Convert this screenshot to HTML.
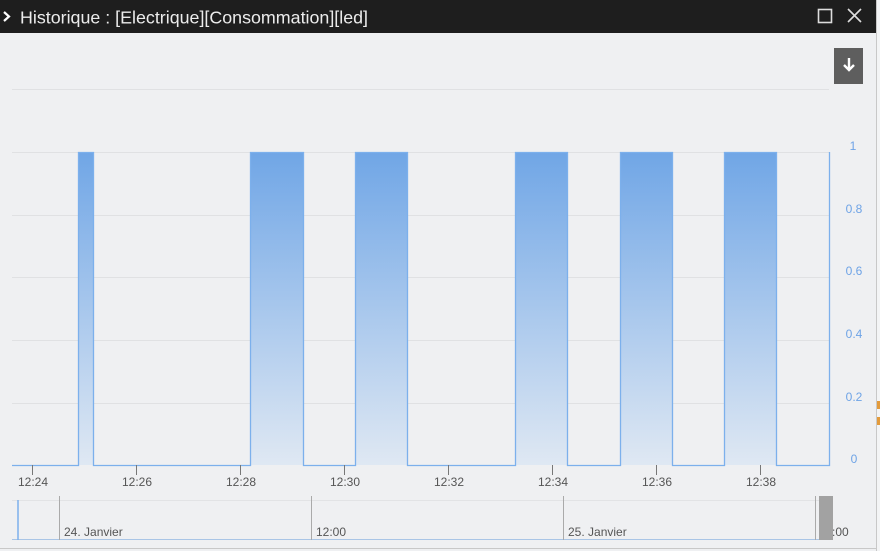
<!DOCTYPE html>
<html><head><meta charset="utf-8"><style>
html,body{margin:0;padding:0;background:#f3f4f5;width:880px;height:551px;overflow:hidden;font-family:"Liberation Sans",sans-serif}
</style></head><body>
<svg width="880" height="551" viewBox="0 0 880 551" xmlns="http://www.w3.org/2000/svg" style="display:block">
<defs><linearGradient id="g" x1="0" y1="0" x2="0" y2="1">
<stop offset="0" stop-color="#70a6e6"/><stop offset="1" stop-color="#dfe8f3"/></linearGradient></defs>
<rect x="0" y="0" width="876" height="551" fill="#eff0f2"/>
<line x1="876.5" y1="0" x2="876.5" y2="551" stroke="#c8c8c8"/>
<line x1="0" y1="548.5" x2="876" y2="548.5" stroke="#c8c8c8"/>
<rect x="0" y="0" width="876" height="33" fill="#1e1e1e"/>
<path d="M4 12 L9 16.5 L4 21" fill="none" stroke="#fff" stroke-width="2.2"/>
<text x="20" y="23.5" fill="#ececec" font-size="17.5" textLength="348" lengthAdjust="spacingAndGlyphs">Historique : [Electrique][Consommation][led]</text>
<rect x="818.5" y="9.5" width="13" height="13" fill="none" stroke="#ddd" stroke-width="1.6"/>
<path d="M848 9 L861 22 M861 9 L848 22" stroke="#ddd" stroke-width="1.6"/>
<rect x="834" y="48" width="29" height="36" fill="#5e5e5e"/>
<path d="M849 58 V70 M844 65 L849 70 L854 65" fill="none" stroke="#fff" stroke-width="2.4"/>
<g stroke="#e0e1e3" stroke-width="1">
<line x1="12" y1="89.5" x2="829" y2="89.5"/>
<line x1="12" y1="152.5" x2="829" y2="152.5"/>
<line x1="12" y1="215.5" x2="829" y2="215.5"/>
<line x1="12" y1="277.5" x2="829" y2="277.5"/>
<line x1="12" y1="340.5" x2="829" y2="340.5"/>
<line x1="12" y1="403.5" x2="829" y2="403.5"/>
</g>
<g fill="url(#g)">
<rect x="78" y="152" width="15" height="313"/>
<rect x="250" y="152" width="53" height="313"/>
<rect x="355" y="152" width="52" height="313"/>
<rect x="515" y="152" width="52" height="313"/>
<rect x="620" y="152" width="52" height="313"/>
<rect x="724" y="152" width="52" height="313"/>
</g>
<path d="M12 465.5 H78.5 V152.5 H93.5 V465.5 H250.5 V152.5 H303.5 V465.5 H355.5 V152.5 H407.5 V465.5 H515.5 V152.5 H567.5 V465.5 H620.5 V152.5 H672.5 V465.5 H724.5 V152.5 H776.5 V465.5 H829.5 V152" fill="none" stroke="#7cb0ec" stroke-width="1.3"/>
<g fill="#6ea3e6" font-size="12" text-anchor="middle">
<text x="853" y="150">1</text><text x="854" y="213">0.8</text><text x="854" y="275">0.6</text>
<text x="854" y="338">0.4</text><text x="854" y="401">0.2</text><text x="854" y="463">0</text>
</g>
<g stroke="#777" stroke-width="1">
<line x1="32.5" y1="465" x2="32.5" y2="475"/><line x1="136.5" y1="465" x2="136.5" y2="475"/>
<line x1="240.5" y1="465" x2="240.5" y2="475"/><line x1="344.5" y1="465" x2="344.5" y2="475"/>
<line x1="448.5" y1="465" x2="448.5" y2="475"/><line x1="552.5" y1="465" x2="552.5" y2="475"/>
<line x1="656.5" y1="465" x2="656.5" y2="475"/><line x1="760.5" y1="465" x2="760.5" y2="475"/>
</g>
<g fill="#555" font-size="12" text-anchor="middle">
<text x="33" y="486">12:24</text><text x="137" y="486">12:26</text><text x="241" y="486">12:28</text>
<text x="345" y="486">12:30</text><text x="449" y="486">12:32</text><text x="553" y="486">12:34</text>
<text x="657" y="486">12:36</text><text x="761" y="486">12:38</text>
</g>
<line x1="12" y1="500.5" x2="820" y2="500.5" stroke="#e2e3e5"/>
<line x1="12" y1="539.5" x2="820" y2="539.5" stroke="#a9c5e6"/>
<line x1="18" y1="500" x2="18" y2="540" stroke="#7cb0ec" stroke-width="1.5"/>
<g stroke="#aaa"><line x1="59.5" y1="496" x2="59.5" y2="540"/><line x1="311.5" y1="496" x2="311.5" y2="540"/>
<line x1="563.5" y1="496" x2="563.5" y2="540"/><line x1="815.5" y1="496" x2="815.5" y2="540"/></g>
<g fill="#555" font-size="12">
<text x="64" y="536">24. Janvier</text><text x="316" y="536">12:00</text><text x="568" y="536">25. Janvier</text>
</g>
<rect x="819" y="496" width="14" height="44" fill="#a2a2a2"/>
<text x="832" y="536" fill="#555" font-size="12">:00</text>
<rect x="877" y="401" width="3" height="8" fill="#e39b3c"/>
<rect x="877" y="417" width="3" height="8" fill="#e39b3c"/>
</svg>
</body></html>
